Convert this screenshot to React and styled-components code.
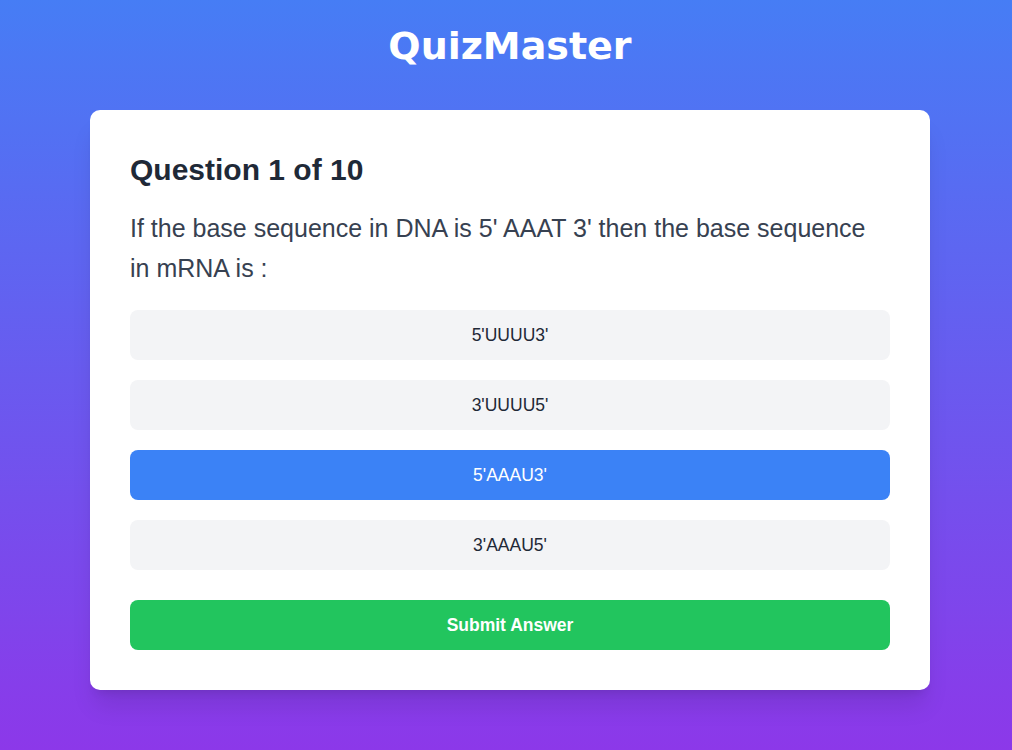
import React, { useState } from "react";
import styled, { createGlobalStyle } from "styled-components";

const GlobalStyle = createGlobalStyle`
  * { box-sizing: border-box; }
  html, body { margin: 0; padding: 0; }
  body {
    font-family: "Liberation Sans", Arial, sans-serif;
    background: #6a5cee;
  }
`;

const Page = styled.div`
  min-height: 100vh;
  background: linear-gradient(180deg, #467df5 0%, #8c38e9 100%);
  padding: 22px 16px 40px 24px;
  display: flex;
  flex-direction: column;
  align-items: center;
`;

const Title = styled.h1`
  margin: 0 0 40px;
  font-family: "DejaVu Sans", "Liberation Sans", sans-serif;
  font-size: 38px;
  line-height: 48px;
  font-weight: 700;
  color: #ffffff;
  text-align: center;
`;

const Card = styled.div`
  width: 840px;
  background: #ffffff;
  border-radius: 10px;
  padding: 42px 40px 40px;
  box-shadow: 0 20px 25px -5px rgba(0, 0, 0, 0.1), 0 8px 10px -6px rgba(0, 0, 0, 0.1);
`;

const Heading = styled.h2`
  margin: 0;
  font-size: 30px;
  line-height: 36px;
  font-weight: 700;
  color: #1f2937;
`;

const QuestionText = styled.p`
  margin: 20px 0 22px;
  font-size: 25px;
  line-height: 40px;
  color: #374151;
`;

const Options = styled.div`
  display: flex;
  flex-direction: column;
  gap: 20px;
`;

const Option = styled.button`
  height: 50px;
  width: 100%;
  border: none;
  border-radius: 8px;
  font-family: "Liberation Sans", Arial, sans-serif;
  font-size: 17.5px;
  cursor: pointer;
  background: ${(p) => (p.$selected ? "#3b82f6" : "#f3f4f6")};
  color: ${(p) => (p.$selected ? "#ffffff" : "#1f2937")};
`;

const SubmitButton = styled.button`
  margin-top: 30px;
  height: 50px;
  width: 100%;
  border: none;
  border-radius: 8px;
  background: #22c55e;
  color: #ffffff;
  font-family: "Liberation Sans", Arial, sans-serif;
  font-size: 17.5px;
  font-weight: 700;
  cursor: pointer;
`;

const options = ["5'UUUU3'", "3'UUUU5'", "5'AAAU3'", "3'AAAU5'"];

export default function App() {
  const [selected, setSelected] = useState(2);
  return (
    <>
      <GlobalStyle />
      <Page>
        <Title>QuizMaster</Title>
        <Card>
          <Heading>Question 1 of 10</Heading>
          <QuestionText>
            If the base sequence in DNA is 5' AAAT 3' then the base sequence in mRNA is :
          </QuestionText>
          <Options>
            {options.map((o, i) => (
              <Option key={o} $selected={selected === i} onClick={() => setSelected(i)}>
                {o}
              </Option>
            ))}
          </Options>
          <SubmitButton>Submit Answer</SubmitButton>
        </Card>
      </Page>
    </>
  );
}
